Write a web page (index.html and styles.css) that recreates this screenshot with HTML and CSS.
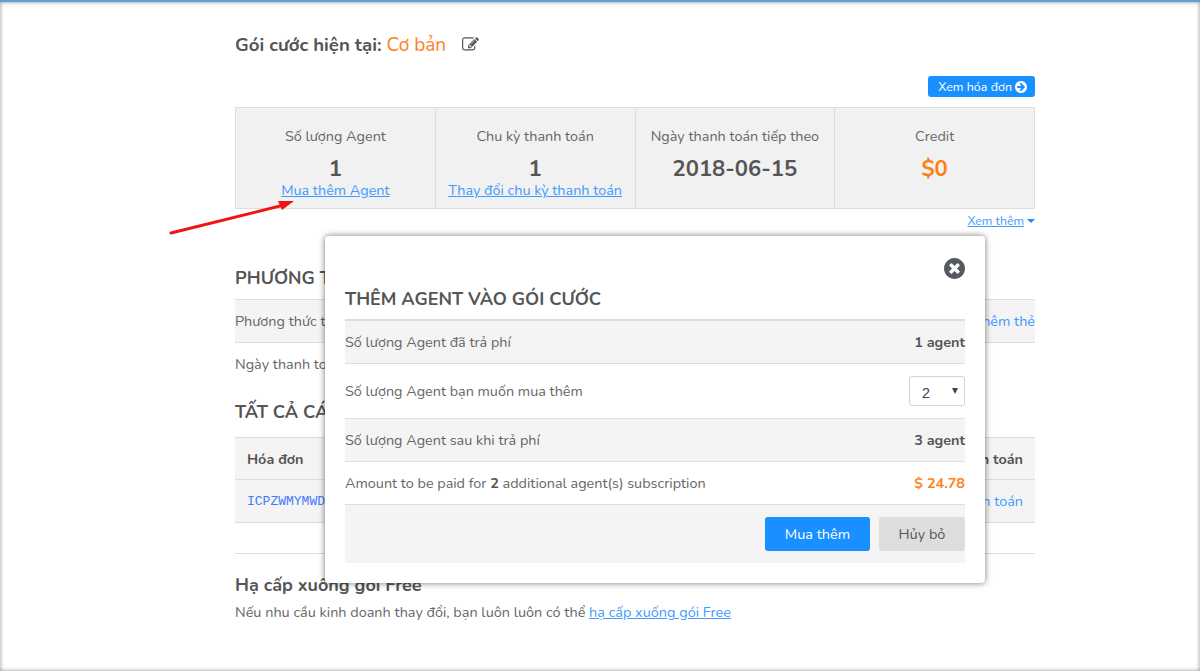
FILE: index.html
```html
<!DOCTYPE html>
<html lang="vi">
<head>
    <meta charset="utf-8">
    <title>Gói cước</title>
    <link rel="stylesheet" href="styles.css">
</head>
<body>
    <div class="page">
        <h3 class="plan-title">
            Gói cước hiện tại: <span class="plan-name">Cơ bản</span>
            <svg class="edit-icon" viewBox="0 0 1792 1792" width="17" height="17">
                <path fill="#555" d="M888 1184l116-116-152-152-116 116v56h96v96h56zm440-720q-16-16-33 1l-350 350q-17 17-1 33t33-1l350-350q17-17 1-33zm80 594v190q0 119-84.500 203.500t-203.500 84.500h-832q-119 0-203.500-84.500t-84.500-203.500v-832q0-119 84.500-203.500t203.500-84.500h832q63 0 117 25 15 7 18 23 3 17-9 29l-49 49q-14 14-32 8-23-6-45-6h-832q-66 0-113 47t-47 113v832q0 66 47 113t113 47h832q66 0 113-47t47-113v-126q0-13 9-22l64-64q15-15 35-7t20 29zm-96-738l288 288-672 672h-288v-288zm444 132l-92 92-288-288 92-92q28-28 68-28t68 28l152 152q28 28 28 68t-28 68z"/>
            </svg>
        </h3>
        <div class="invoice-row">
            <a class="invoice-btn" href="#">Xem hóa đơn
                <svg viewBox="128 128 1536 1536" width="12" height="12"><path fill="#fff" d="M1413 896q0-27-18-45l-91-91-362-362q-18-18-45-18t-45 18l-91 91q-18 18-18 45t18 45l189 189h-502q-26 0-45 19t-19 45v128q0 26 19 45t45 19h502l-189 189q-19 19-19 45t19 45l91 91q18 18 45 18t45-18l362-362 91-91q18-18 18-45zm251 0q0 209-103 385.500t-279.500 279.500-385.500 103-385.500-103-279.500-279.500-103-385.500 103-385.500 279.500-279.500 385.500-103 385.500 103 279.500 279.500 103 385.500z"/></svg>
            </a>
        </div>
        <div class="stats">
            <div class="stat">
                <div class="stat-label">Số lượng Agent</div>
                <div class="stat-value">1</div>
                <a class="link" href="#">Mua thêm Agent</a>
            </div>
            <div class="stat">
                <div class="stat-label">Chu kỳ thanh toán</div>
                <div class="stat-value">1</div>
                <a class="link" href="#">Thay đổi chu kỳ thanh toán</a>
            </div>
            <div class="stat">
                <div class="stat-label">Ngày thanh toán tiếp theo</div>
                <div class="stat-value">2018-06-15</div>
            </div>
            <div class="stat">
                <div class="stat-label">Credit</div>
                <div class="stat-value stat-orange">$0</div>
            </div>
        </div>
        <div class="more-row"><a class="link" href="#">Xem thêm</a><span class="caret"></span></div>

        <h2 class="section-title">PHƯƠNG THỨC</h2>
        <div class="pay-row">
            <span>Phương thức thanh toán</span>
            <a class="pay-link" href="#">Thêm thẻ</a>
        </div>
        <div class="pay-date">Ngày thanh toán</div>

        <h2 class="section-title all-title">TẤT CẢ CÁC HÓA ĐƠN</h2>
        <div class="bill-head">
            <span>Hóa đơn</span>
            <span>Thanh toán</span>
        </div>
        <div class="bill-row">
            <a class="bill-code" href="#">ICPZWMYMWD</a>
            <a class="pay-link" href="#">Thanh toán</a>
        </div>

        <div class="downgrade">
            <h4>Hạ cấp xuống gói Free</h4>
            <p>Nếu nhu cầu kinh doanh thay đổi, bạn luôn luôn có thể <a class="link" href="#">hạ cấp xuống gói Free</a></p>
        </div>
    </div>

    <!-- red arrow drawn over the screenshot -->
    <svg class="arrow" width="140" height="50" viewBox="0 0 140 50">
        <path d="M2 35 L115 7" stroke="#f01414" stroke-width="3" stroke-linecap="round"/>
        <path d="M125 3 L109 3 L113 12 Z" fill="#f01414"/>
    </svg>

    <div class="modal">
        <button class="modal-close" aria-label="Đóng">
            <svg viewBox="128 128 1536 1536" width="21" height="21"><path fill="#555a60" d="M1277 1122q0-26-19-45l-181-181 181-181q19-19 19-45 0-27-19-46l-90-90q-19-19-46-19-26 0-45 19l-181 181-181-181q-19-19-45-19-27 0-46 19l-90 90q-19 19-19 46 0 26 19 45l181 181-181 181q-19 19-19 45 0 27 19 46l90 90q19 19 46 19 26 0 45-19l181-181 181 181q19 19 45 19 27 0 46-19l90-90q19-19 19-46zm387-226q0 209-103 385.500t-279.500 279.500-385.500 103-385.500-103-279.500-279.500-103-385.500 103-385.500 279.500-279.500 385.500-103 385.500 103 279.500 279.500 103 385.500z"/></svg>
        </button>
        <h2 class="modal-title">THÊM AGENT VÀO GÓI CƯỚC</h2>
        <div class="m-row m-first m-grey">
            <span>Số lượng Agent đã trả phí</span>
            <b>1 agent</b>
        </div>
        <div class="m-row m-select">
            <span>Số lượng Agent bạn muốn mua thêm</span>
            <div class="fake-select">2<span class="select-arrow"></span></div>
        </div>
        <div class="m-row m-grey">
            <span>Số lượng Agent sau khi trả phí</span>
            <b>3 agent</b>
        </div>
        <div class="m-row">
            <span>Amount to be paid for <b>2</b> additional agent(s) subscription</span>
            <b class="m-price">$ 24.78</b>
        </div>
        <div class="m-footer">
            <a class="btn btn-primary" href="#">Mua thêm</a>
            <a class="btn btn-cancel" href="#">Hủy bỏ</a>
        </div>
    </div>
</body>
</html>
```

FILE: styles.css
```css
* {
    box-sizing: border-box;
}
body {
    margin: 0;
    height: 671px;
    overflow: hidden;
    position: relative;
    background: #fff;
    border-top: 2px solid #5d9fd8;
    box-shadow: inset 0 0 4px rgba(0, 0, 0, 0.45);
    font-family: "Nunito", "Lato", "Open Sans", sans-serif;
    font-size: 14.4px;
    color: #666;
}
.page {
    width: 800px;
    margin-left: 235px;
    padding-top: 32px;
}
.plan-title {
    margin: 0;
    font-size: 18.6px;
    line-height: 22px;
    font-weight: 700;
    color: #555;
}
.plan-name {
    font-size: 19px;
    font-weight: 400;
    color: #ff7f24;
    margin-right: 11px;
}
.edit-icon {
    vertical-align: -2px;
}
.invoice-row {
    display: flex;
    justify-content: flex-end;
    margin-top: 20px;
}
.invoice-btn {
    display: flex;
    align-items: center;
    gap: 3px;
    height: 21px;
    padding: 0 8px 0 10px;
    background: #1890ff;
    color: #fff;
    border-radius: 3px;
    font-size: 12.5px;
    text-decoration: none;
}
.stats {
    display: flex;
    height: 102px;
    margin-top: 10px;
    background: #f1f1f1;
    border: 1px solid #ddd;
}
.stat {
    flex: 1;
    padding-top: 19px;
    text-align: center;
    border-right: 1px solid #ddd;
}
.stat:last-child {
    border-right: none;
}
.stat-label {
    line-height: 18px;
}
.stat-value {
    margin-top: 13px;
    font-size: 22px;
    line-height: 22px;
    font-weight: 700;
    color: #555;
}
.stat-orange {
    color: #ff7f0e;
}
.link {
    color: #3f9bff;
    text-decoration: underline;
}
.more-row {
    display: flex;
    justify-content: flex-end;
    align-items: center;
    gap: 2px;
    margin-top: 4px;
    font-size: 12.3px;
}
.caret {
    margin-left: 1px;
    border: 4px solid transparent;
    border-top-color: #1890ff;
    border-bottom: none;
}
.section-title {
    margin: 38px 0 10px;
    font-size: 18px;
    line-height: 22px;
    font-weight: 700;
    color: #555;
}
.pay-row {
    display: flex;
    justify-content: space-between;
    align-items: center;
    height: 44px;
    background: #f4f4f4;
    border-top: 1px solid #ddd;
    border-bottom: 1px solid #ddd;
}
.pay-link {
    color: #3f9bff;
    text-decoration: none;
}
.pay-date {
    height: 43px;
    line-height: 43px;
}
.all-title {
    margin-top: 15px;
    margin-bottom: 14px;
}
.bill-head, .bill-row {
    display: flex;
    justify-content: space-between;
    align-items: center;
    height: 43px;
    padding: 0 12px;
    background: #f4f4f4;
    border-bottom: 1px solid #ddd;
}
.bill-head {
    border-top: 1px solid #ddd;
    font-weight: 700;
    color: #555;
}
.bill-code {
    font-family: "Liberation Mono", monospace;
    font-size: 13px;
    color: #3f7bff;
    text-decoration: none;
}
.downgrade {
    margin-top: 30px;
    padding-top: 20px;
    border-top: 1px solid #ddd;
}
.downgrade h4 {
    margin: 0;
    font-size: 18px;
    line-height: 22px;
    color: #555;
}
.downgrade p {
    margin: 6px 0 0;
    font-size: 14.45px;
    line-height: 20px;
}
.arrow {
    position: absolute;
    left: 169px;
    top: 196px;
}
.modal {
    position: absolute;
    left: 325px;
    top: 234px;
    width: 660px;
    height: 347px;
    padding: 20px;
    background: #fff;
    border-radius: 4px;
    box-shadow: 0 0 6px rgba(0, 0, 0, 0.55);
}
.modal-close {
    position: absolute;
    right: 20px;
    top: 22px;
    padding: 0;
    border: none;
    background: none;
    line-height: 0;
}
.modal-title {
    margin: 31px 0 8px;
    font-size: 18px;
    line-height: 24px;
    font-weight: 700;
    color: #555;
}
.m-row {
    display: flex;
    justify-content: space-between;
    align-items: center;
    height: 43px;
    border-bottom: 1px solid #ddd;
}
.m-first {
    height: 45px;
    border-top: 2px solid #ddd;
}
.m-grey {
    background: #f4f4f4;
}
.m-row b {
    color: #555;
}
.m-select {
    height: 55px;
}
.fake-select {
    display: flex;
    justify-content: space-between;
    align-items: center;
    width: 56px;
    height: 30px;
    padding: 4px 6px 0 12px;
    border: 1px solid #ccd5d8;
    border-radius: 3px;
    font-family: "Liberation Sans", sans-serif;
    color: #444;
}
.select-arrow {
    margin-bottom: 4px;
    border: 3px solid transparent;
    border-top: 6px solid #444;
    border-bottom: none;
}
.m-row .m-price {
    color: #ff7f24;
}
.m-footer {
    display: flex;
    justify-content: flex-end;
    gap: 9px;
    height: 58px;
    padding-top: 12px;
    background: #f4f4f4;
}
.btn {
    display: flex;
    align-items: center;
    justify-content: center;
    height: 34px;
    border-radius: 3px;
    text-decoration: none;
    font-size: 14.5px;
}
.btn-primary {
    width: 105px;
    background: #1890ff;
    color: #fff;
}
.btn-cancel {
    width: 86px;
    background: #ddd;
    color: #555;
}
```
